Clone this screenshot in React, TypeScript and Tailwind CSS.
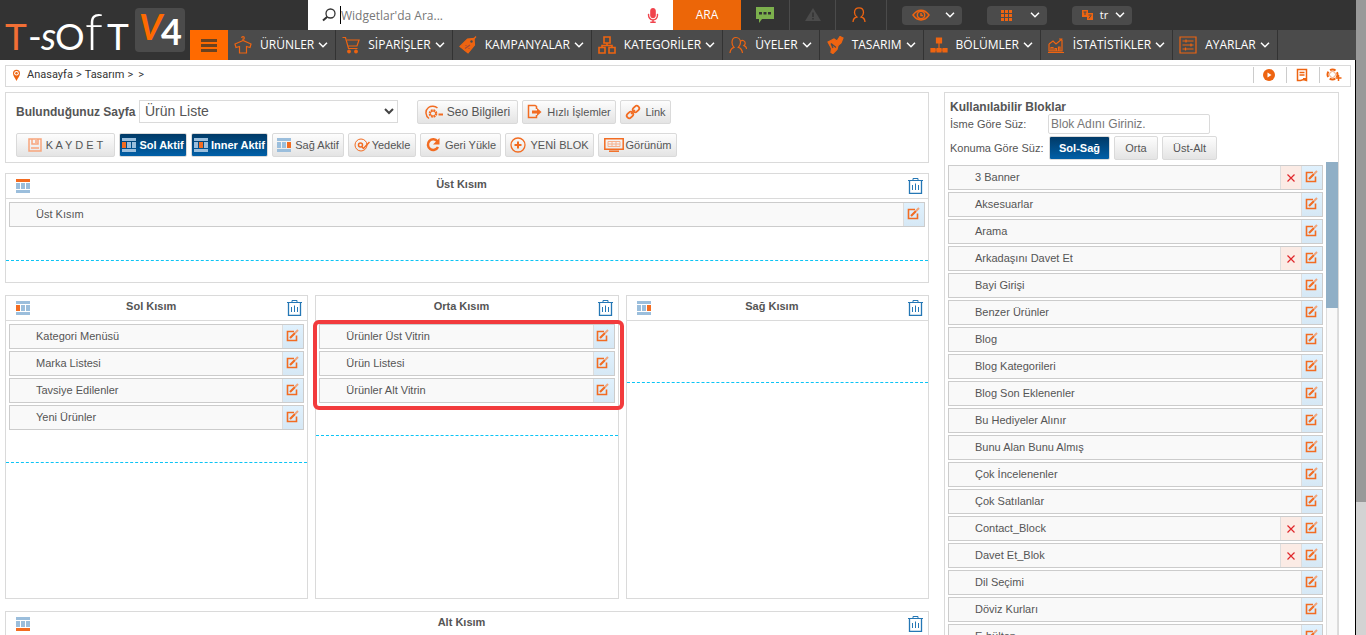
import type { ReactNode } from "react";
import clsx from "clsx";
import { FaMicrophone } from "react-icons/fa";

const availableBlocks: { name: string; removable?: boolean }[] = [
  { name: "3 Banner", removable: true },
  { name: "Aksesuarlar" },
  { name: "Arama" },
  { name: "Arkadaşını Davet Et", removable: true },
  { name: "Bayi Girişi" },
  { name: "Benzer Ürünler" },
  { name: "Blog" },
  { name: "Blog Kategorileri" },
  { name: "Blog Son Eklenenler" },
  { name: "Bu Hediyeler Alınır" },
  { name: "Bunu Alan Bunu Almış" },
  { name: "Çok İncelenenler" },
  { name: "Çok Satılanlar" },
  { name: "Contact_Block", removable: true },
  { name: "Davet Et_Blok", removable: true },
  { name: "Dil Seçimi" },
  { name: "Döviz Kurları" },
  { name: "E-bülten" },
];

const navItems: { label: string; icon: ReactNode }[] = [
  {
    label: "ÜRÜNLER",
    icon: (
      <NavIcon>
        <path d="M9 4.500V3.200a1.300 1.300 0 1 0-1.300-1.300M9 4.500L1 8l1 3.500 3.500-1V17h7v-6.500l3.500 1L17 8z" />
      </NavIcon>
    ),
  },
  {
    label: "SİPARİŞLER",
    icon: (
      <NavIcon>
        <path d="M.5 1.500h3l3 11h9M5 4h12l-2 6H6.500" />
        <circle cx="7" cy="15.500" r="1.300" fill="currentColor" />
        <circle cx="14" cy="15.500" r="1.300" fill="currentColor" />
      </NavIcon>
    ),
  },
  {
    label: "KAMPANYALAR",
    icon: (
      <NavIcon>
        <path d="M1 10.500L8.500 3 15 2.500 15.500 9 9 17z" fill="currentColor" />
        <path d="M13 5l4-4.500" />
        <circle cx="12.500" cy="5.500" r="1.200" fill="#4b4b4b" stroke="none" />
        <path d="M6 12.500l5-3.500M6.500 9.500h1M9.500 12.500h1" stroke="#a34a35" />
      </NavIcon>
    ),
  },
  {
    label: "KATEGORİLER",
    icon: (
      <NavIcon>
        <path d="M6 1h6v6H6zM1 11.500h6v5.500H1zM11 11.500h6v5.500h-6zM9 7v2.500M4 11.500v-2h10v2" strokeWidth="1.600" />
      </NavIcon>
    ),
  },
  {
    label: "ÜYELER",
    icon: (
      <NavIcon>
        <path d="M1 17c.3-4 2-5 4-5.600C3.500 10 3 8.500 3 6.500 3 3.500 4.500 1.500 7 1.500s4.500 2 4.500 5c0 2-.8 3.500-2.200 4.900 2.500.6 3.700 2 4.200 5.600M12 5c1.500-1.200 4.200-.2 4.200 2.200 0 1-.4 1.800-1.200 2.400 1.500.4 2.400 1.300 2.600 3.400" />
      </NavIcon>
    ),
  },
  {
    label: "TASARIM",
    icon: (
      <NavIcon>
        <path d="M2 6l6-3 3 2 3-4.500 3 1.500-2 5-3 2.500-1 4-4 4-2-1 .5-4z" fill="currentColor" />
        <path d="M5 7.500l5 4M5 7.500l2 4.500" stroke="#4b4b4b" />
      </NavIcon>
    ),
  },
  {
    label: "BÖLÜMLER",
    icon: (
      <NavIcon>
        <path d="M6.500 2h5v5h-5zM1 12.500h4V16H1zM7 12.500h4V16H7zM13 12.500h4V16h-4z" fill="currentColor" />
        <path d="M9 7v6M3 14h12" />
      </NavIcon>
    ),
  },
  {
    label: "İSTATİSTİKLER",
    icon: (
      <NavIcon>
        <path d="M2 8v7h13V4M1 16.500h16M2 8l4-3 3 3 6-5M12 3h3.500" />
        <path d="M4 15v-3.500h2V15M8 15v-2.500h1.500V15M11.500 15v-4h1.500v4" />
      </NavIcon>
    ),
  },
  {
    label: "AYARLAR",
    icon: (
      <NavIcon>
        <path d="M1 1h16v16H1zM3.500 5h11M3.500 9h11M3.500 13h11M7 3.500v3M12 7.500v3M6.500 11.500v3" />
      </NavIcon>
    ),
  },
];

function NavIcon({ children }: { children: ReactNode }) {
  return (
    <svg
      viewBox="0 0 18 18"
      className="size-[18px] flex-none text-[#ee6411]"
      fill="none"
      stroke="currentColor"
      strokeWidth="1.2"
      aria-hidden="true"
    >
      {children}
    </svg>
  );
}

function Chevron() {
  return (
    <svg viewBox="0 0 10 6" className="h-[6px] w-[10px] flex-none" fill="none" stroke="#fff" strokeWidth="1.5" aria-hidden="true">
      <path d="M1 .8l4 4 4-4" />
    </svg>
  );
}

function ToolIcon({ children }: { children: ReactNode }) {
  return (
    <svg
      viewBox="0 0 16 16"
      className="size-4 flex-none text-[#f26c22]"
      fill="none"
      stroke="currentColor"
      strokeWidth="1.5"
      aria-hidden="true"
    >
      {children}
    </svg>
  );
}

type Area = "top" | "left" | "center" | "right" | "bottom";

/** Miniature page plan with one region picked out in orange. */
function LayoutIcon({ active }: { active: Area }) {
  const color = (area: Area) => (area === active ? "#f36c21" : "#9bbedc");
  return (
    <svg viewBox="0 0 14 14" className="size-[14px] flex-none" shapeRendering="crispEdges" aria-hidden="true">
      <rect width="14" height="3" fill={color("top")} />
      <rect y="4" width="4" height="6" fill={color("left")} />
      <rect x="5" y="4" width="4" height="6" fill={color("center")} />
      <rect x="10" y="4" width="4" height="6" fill={color("right")} />
      <rect y="11" width="14" height="3" fill={color("bottom")} />
    </svg>
  );
}

function TrashIcon() {
  return (
    <svg viewBox="0 0 15 16" className="h-4 w-[15px]" fill="none" stroke="#2577b5" aria-hidden="true">
      <path d="M0 2.500h15M5 2.500v-2h5v2" />
      <path d="M1.500 3v12.500h12V3" strokeWidth="1.3" />
      <path d="M4.500 7v5M7.500 5.500v6.500M10.500 7v5" />
    </svg>
  );
}

function EditIcon() {
  return (
    <svg viewBox="0 0 13 13" className="size-[13px]" fill="none" stroke="#f26c22" aria-hidden="true">
      <path d="M8 2.500H1.500v9h9V6.500" strokeWidth="1.600" />
      <path d="M4 9l5-5" strokeWidth="2.200" />
      <path d="M9 4l3-3" stroke="#f0a47c" strokeWidth="2" />
    </svg>
  );
}

function Logo() {
  return (
    <a href="#" aria-label="T-SOFT V4" className="flex w-[190px] flex-none items-center pl-[5px]">
      <svg viewBox="0 0 185 60" className="h-[60px] w-[185px]" fontFamily="Lato, sans-serif" fill="#fff">
        <text x="0" y="50" fontSize="37" fill="#f26f35">T</text>
        <text x="23" y="50" fontSize="37">-</text>
        <text x="36" y="50" fontSize="38" fontStyle="italic">s</text>
        <text x="50" y="50" fontSize="37">O</text>
        <text x="80" y="50" fontSize="52" fontWeight="300">f</text>
        <text x="102" y="50" fontSize="37">T</text>
        <rect x="130" y="8" width="50" height="44" rx="4" fill="#4b4b4b" />
        <text x="134" y="40" fontSize="36" fontStyle="italic" fontWeight="700" fill="#ff6a00">V</text>
        <text x="156" y="45" fontSize="36" fontWeight="700">4</text>
      </svg>
    </a>
  );
}

function PillMenu({ label, children }: { label: string; children: ReactNode }) {
  return (
    <button
      type="button"
      aria-label={label}
      aria-haspopup="menu"
      className="flex h-[19px] w-[60px] items-center justify-between rounded bg-[#4b4b4b] pl-2.5 pr-[7px] text-[11px] text-white"
    >
      {children}
      <Chevron />
    </button>
  );
}

function TopBar() {
  return (
    <div className="flex h-[30px] pl-[118px]">
      <div className="flex w-[365px] items-center bg-white pl-3.5 pr-[13px]">
        <svg viewBox="0 0 14 14" className="size-[14px] flex-none" fill="none" stroke="#333" strokeWidth="1.3" aria-hidden="true">
          <circle cx="8.500" cy="5.500" r="4.500" />
          <path d="M5.300 8.700L1 12.500" strokeWidth="2" />
        </svg>
        <input
          type="text"
          aria-label="Widgetlar'da Ara"
          placeholder="Widgetlar'da Ara..."
          className="ml-1 h-[18px] min-w-0 flex-1 border-l border-black font-['Open_Sans',sans-serif] text-xs outline-none placeholder:text-[#777]"
        />
        <FaMicrophone className="h-[15px] w-[14px] text-[#f0434c]" aria-hidden="true" />
      </div>
      <button type="button" className="w-[68px] bg-[#ec6608] text-xs text-white">
        ARA
      </button>
      <button type="button" aria-label="Mesajlar" className="flex w-[49px] items-center justify-center border-r border-[#4b4b4b]">
        <svg viewBox="0 0 18 16" className="h-4 w-[18px]" aria-hidden="true">
          <path d="M0 0h18v12H6l-3 4v-4H0z" fill="#7cb04d" />
          <path d="M3 5h3v2.500H3zM7.500 5h3v2.500h-3zM12 5h3v2.500h-3z" fill="#333" />
        </svg>
      </button>
      <button type="button" aria-label="Uyarılar" className="flex w-[46px] items-center justify-center border-r border-[#4b4b4b]">
        <svg viewBox="0 0 16 14" className="h-[14px] w-4" aria-hidden="true">
          <path d="M8 0l8 13H0z" fill="#4b4b4b" />
          <path d="M8 4.500v4.500M8 10v1.500" stroke="#333" strokeWidth="1.500" />
        </svg>
      </button>
      <button type="button" aria-label="Hesabım" className="flex w-[51px] items-center justify-center border-r border-[#4b4b4b] pr-1">
        <svg viewBox="0 0 14 16" className="h-4 w-[14px]" fill="none" stroke="#ee6411" strokeWidth="1.3" aria-hidden="true">
          <path d="M1 15c.2-3.200 1.500-4.500 3.800-5C3.300 8.800 2.500 7.300 2.500 5.500c0-3 1.800-4.700 4.500-4.700s4.500 1.700 4.500 4.700c0 1.800-.8 3.300-2.300 4.500 2.300.5 3.600 1.800 3.800 5" />
        </svg>
      </button>
      <div className="ml-[15px] flex items-center gap-[25px]">
        <PillMenu label="Görünüm">
          <svg viewBox="0 0 18 12" className="h-3 w-[18px]" fill="none" stroke="#ee6411" strokeWidth="1.500" aria-hidden="true">
            <path d="M1 6c4.500-6.500 11.500-6.500 16 0-4.500 6.500-11.500 6.500-16 0z" />
            <circle cx="9" cy="6" r="3.700" />
            <path d="M9 4v2.500h2" />
          </svg>
        </PillMenu>
        <PillMenu label="Uygulamalar">
          <svg viewBox="0 0 11 11" className="ml-1 size-[11px]" fill="#ee6411" aria-hidden="true">
            <path d="M0 0h3v3H0zM4 0h3v3H4zM8 0h3v3H8zM0 4h3v3H0zM4 4h3v3H4zM8 4h3v3H8zM0 8h3v3H0zM4 8h3v3H4zM8 8h3v3H8z" />
          </svg>
        </PillMenu>
        <PillMenu label="Dil">
          <svg viewBox="0 0 11 10" className="h-2.5 w-[11px]" aria-hidden="true">
            <path d="M0 0h6v3h5v7H5V7H0z" fill="#ee6411" />
            <path d="M1.500 2h3M3 2v3M6.500 5h3M7 8.500l2-3" stroke="#4b4b4b" />
          </svg>
          <span>tr</span>
        </PillMenu>
      </div>
    </div>
  );
}

function MainNav() {
  return (
    <nav className="flex h-[30px] bg-[#4b4b4b] text-xs text-white">
      <button type="button" aria-label="Menü" className="flex w-[38px] flex-none items-center justify-center bg-[#ff6a00]">
        <svg viewBox="0 0 16 13" className="h-[13px] w-4" fill="#694221" aria-hidden="true">
          <path d="M0 0h16v3H0zM0 5h16v3H0zM0 10h16v3H0z" />
        </svg>
      </button>
      {navItems.map((item) => (
        <a key={item.label} href="#" className="flex flex-none items-center border-r border-[#333] pl-1.5 pr-[7px]">
          {item.icon}
          <span className="ml-2 mr-1">{item.label}</span>
          <Chevron />
        </a>
      ))}
    </nav>
  );
}

function Breadcrumb() {
  return (
    <div className="flex h-[22px] items-center border border-[#dadada] pb-0.5 pl-1.5 font-['Roboto',sans-serif] text-[11px] text-[#333]">
      <svg viewBox="0 0 9 12" className="mr-1.5 h-3 w-[9px]" aria-hidden="true">
        <path d="M4.500 12C3 9 1 7 1 4.300a3.500 3.500 0 0 1 7 0C8 7 6 9 4.500 12z" fill="#ee6411" />
        <circle cx="4.500" cy="4.300" r="2.300" fill="#fff" />
        <circle cx="4.500" cy="4.300" r="1.200" fill="#ee6411" />
      </svg>
      <div className="flex flex-1 gap-[3px]">
        <a href="#">Anasayfa</a>
        <span>&gt;</span>
        <a href="#">Tasarım</a>
        <span>&gt;</span>
        <span className="ml-0.5">&gt;</span>
      </div>
      {[
        <svg key="play" viewBox="0 0 14 14" className="size-[14px]" aria-hidden="true">
          <circle cx="7" cy="7" r="6" fill="#ee6411" />
          <path d="M5.500 4.500L9.500 7l-4 2.500z" fill="#fff" />
        </svg>,
        <svg key="note" viewBox="0 0 14 14" className="size-[14px]" fill="none" stroke="#ee6411" strokeWidth="1.500" aria-hidden="true">
          <path d="M2.500 1.500h9v11l-3-1-3 1h-3zM4.500 4.500h5M4.500 7h5" />
          <path d="M8 11h4" strokeWidth="2" />
        </svg>,
        <svg key="help" viewBox="0 0 16 14" className="h-[14px] w-4" fill="none" stroke="#ee6411" aria-hidden="true">
          <circle cx="6.500" cy="6.500" r="5" strokeDasharray="5.800 2" strokeDashoffset="3" strokeWidth="2" />
          <circle cx="6.500" cy="6.500" r="3" stroke="#f2a578" />
          <path d="M12.500 7v6M9.500 10h6" strokeWidth="1.500" />
        </svg>,
      ].map((icon, i) => (
        <button
          key={i}
          type="button"
          aria-label={["Video", "Notlar", "Yardım"][i]}
          className="flex h-4 w-[33px] items-center justify-center border-l border-[#ccc] pr-0.5 last:w-[31px]"
        >
          {icon}
        </button>
      ))}
    </div>
  );
}

function ToolButton({
  children,
  active,
  large,
  className,
}: {
  children: ReactNode;
  active?: boolean;
  large?: boolean;
  className?: string;
}) {
  return (
    <button
      type="button"
      className={clsx(
        "flex h-6 flex-none items-center justify-center whitespace-nowrap rounded-[2px] border border-[#dadada]",
        active
          ? "gap-[3px] bg-linear-to-b from-[#013a67] to-[#0160a8] font-bold text-white"
          : "gap-1 bg-linear-to-b from-[#fdfdfd] to-[#e4e4e4] text-[#555]",
        large ? "text-xs" : "text-[11px]",
        className,
      )}
    >
      {children}
    </button>
  );
}

function Toolbar() {
  return (
    <section className="h-[71px] border border-[#dadada] pl-2.5 pt-[5px]">
      <div className="flex items-center">
        <label htmlFor="page" className="w-[123px] flex-none pt-0.5 text-xs font-bold whitespace-nowrap">
          Bulunduğunuz Sayfa
        </label>
        <div className="relative">
          <select
            id="page"
            className="block h-[23px] w-[259px] appearance-none border border-[#dadada] bg-white pl-[5px] text-sm text-[#555] outline-none"
          >
            <option>Ürün Liste</option>
          </select>
          <svg
            viewBox="0 0 10 7"
            className="pointer-events-none absolute right-1 top-2 h-[7px] w-2.5"
            fill="none"
            stroke="#444"
            strokeWidth="2"
            aria-hidden="true"
          >
            <path d="M1 1l4 4 4-4" />
          </svg>
        </div>
        <div className="ml-[19px] flex gap-1 pt-0.5">
          <ToolButton large className="w-[101px]">
            <svg viewBox="0 0 18 16" className="h-4 w-[18px]" fill="none" stroke="#f26c22" strokeWidth="1.500" aria-hidden="true">
              <path d="M4 14.500C.5 12-.3 6.500 3.500 3.500 6 1.700 10 1.800 12.500 4" />
              <circle cx="8" cy="9.500" r="3.300" strokeWidth="2" strokeDasharray="1.800 .8" />
              <circle cx="8" cy="9.500" r="2.500" strokeWidth="1" />
              <path d="M13.500 10.500H18" strokeWidth="2" />
            </svg>
            Seo Bilgileri
          </ToolButton>
          <ToolButton className="w-[94px]">
            <ToolIcon>
              <path d="M9.500 5V2.500L8 1.500H1.500v12h8V11" />
              <path d="M5 6.500h5V4l4.500 4L10 12V9.500H5z" fill="currentColor" stroke="none" />
            </ToolIcon>
            Hızlı İşlemler
          </ToolButton>
          <ToolButton className="w-[51px]">
            <ToolIcon>
              <rect x="-3.500" y="-2.500" width="7" height="5" rx="2.500" transform="translate(11 5) rotate(-45)" strokeWidth="1.800" />
              <rect x="-3.500" y="-2.500" width="7" height="5" rx="2.500" transform="translate(5 11) rotate(-45)" strokeWidth="1.800" />
              <path d="M6 10l4-4" />
            </ToolIcon>
            Link
          </ToolButton>
        </div>
      </div>
      <div className="mt-[9px] flex gap-1">
        <ToolButton className="w-[99px]">
          <svg viewBox="0 0 14 14" className="size-[14px]" fill="none" stroke="#f7a57c" strokeWidth="1.500" aria-hidden="true">
            <path d="M1 1h12v12H1zM4 1v5h6V1M8 2v3M3 10h8" />
          </svg>
          K A Y D E T
        </ToolButton>
        <ToolButton active className="w-[68px]">
          <LayoutIcon active="left" />
          Sol Aktif
        </ToolButton>
        <ToolButton active className="w-[77px]">
          <LayoutIcon active="center" />
          Inner Aktif
        </ToolButton>
        <ToolButton className="w-[72px]">
          <LayoutIcon active="right" />
          Sağ Aktif
        </ToolButton>
        <ToolButton className="w-[68px] gap-[2px]">
          <ToolIcon>
            <circle cx="7" cy="8" r="6" strokeWidth="1" />
            <circle cx="6.500" cy="8" r="2" />
            <path d="M8 10l1.500 1.500L15.500 5" />
          </ToolIcon>
          Yedekle
        </ToolButton>
        <ToolButton className="w-[81px]">
          <ToolIcon>
            <path d="M12.500 4.500A5.300 5.300 0 1 0 13 10" strokeWidth="2.500" />
            <path d="M14.500 1v6.500H8z" fill="currentColor" stroke="none" />
          </ToolIcon>
          Geri Yükle
        </ToolButton>
        <ToolButton className="w-[89px]">
          <ToolIcon>
            <circle cx="8" cy="8" r="7" strokeWidth="1.300" />
            <path d="M8 4.500v7M4.500 8h7" strokeWidth="2" />
          </ToolIcon>
          YENİ BLOK
        </ToolButton>
        <ToolButton className="w-[79px] gap-[2px]">
          <svg viewBox="0 0 20 14" className="h-[14px] w-5" fill="none" stroke="#f26c22" aria-hidden="true">
            <path d="M.8.800h18.400v10.400H.8z" strokeWidth="1.500" />
            <path d="M4 3.500h12v5H4zM4 6h12M8 3.500v5M12 3.500v5" stroke="#f7b08c" />
            <path d="M5 13.200h10" strokeWidth="1.500" />
          </svg>
          Görünüm
        </ToolButton>
      </div>
    </section>
  );
}

function BlockRow({ name, removable }: { name: string; removable?: boolean }) {
  return (
    <li className="flex h-[25px] border border-[#ccc] bg-[#f9f9f9] text-[11px]">
      <span className="flex-1 pl-[26px] leading-[22px]">{name}</span>
      {removable && (
        <button
          type="button"
          aria-label={`${name} sil`}
          className="flex w-[21px] items-center justify-center border-l border-[#ddd] bg-[#fbebe5]"
        >
          <svg viewBox="0 0 8 8" className="size-2" stroke="#e0262b" strokeWidth="1.200" aria-hidden="true">
            <path d="M.5.500l7 7M7.500.500l-7 7" />
          </svg>
        </button>
      )}
      <button
        type="button"
        aria-label={`${name} düzenle`}
        className="flex w-[21px] items-center justify-center border-l border-[#ddd] bg-linear-to-b from-[#e0f1fd] to-[#d6e8f5] pb-0.5 pr-0.5"
      >
        <EditIcon />
      </button>
    </li>
  );
}

function Zone({
  title,
  area,
  blocks = [],
  highlighted,
  className,
}: {
  title: string;
  area: Area;
  blocks?: string[];
  highlighted?: boolean;
  className?: string;
}) {
  return (
    <section className={clsx("border border-[#dadada]", className)}>
      <header className="flex h-[25px] items-center border-b border-[#dadada] pl-2.5 pr-[5px]">
        <div className="w-[15px]">{area !== "center" && <LayoutIcon active={area} />}</div>
        <h2 className="flex-1 pb-[3px] pr-4 text-center text-[11px] font-bold">{title}</h2>
        <button type="button" aria-label={`${title} temizle`}>
          <TrashIcon />
        </button>
      </header>
      <div className="relative min-h-[62px] border-b border-dashed border-[#0cc4f5] px-[3px] pb-8 pt-[3px]">
        <ul className="flex flex-col gap-0.5">
          {blocks.map((name) => (
            <BlockRow key={name} name={name} />
          ))}
        </ul>
        {highlighted && (
          <div className="absolute -left-[3px] -right-[6px] -top-px bottom-[25px] rounded-md border-4 border-[#f23b3d]" />
        )}
      </div>
    </section>
  );
}

function AvailableBlocks() {
  return (
    <aside className="w-[395px] flex-none border border-[#dadada]">
      <div className="pl-[5px]">
        <h2 className="pt-[7px] text-xs leading-[14px] font-bold">Kullanılabilir Bloklar</h2>
        <div className="flex text-[11px]">
          <label htmlFor="block-name" className="w-[98px] pt-0.5">
            İsme Göre Süz:
          </label>
          <input
            id="block-name"
            type="text"
            placeholder="Blok Adını Giriniz."
            className="h-5 w-[162px] rounded-[2px] border border-[#dadada] px-0.5 text-xs outline-none placeholder:text-[#777]"
          />
        </div>
        <div className="mt-0.5 flex items-center text-[11px]">
          <span className="w-[99px]">Konuma Göre Süz:</span>
          <div className="flex gap-1">
            <ToolButton active className="w-[61px]">
              Sol-Sağ
            </ToolButton>
            <ToolButton className="w-[44px]">Orta</ToolButton>
            <ToolButton className="w-[55px]">Üst-Alt</ToolButton>
          </div>
        </div>
      </div>
      <div className="mt-0.5 flex">
        <ul className="flex flex-1 flex-col gap-0.5 pl-[3px] pr-[3px] pt-[3px]">
          {availableBlocks.map((block) => (
            <BlockRow key={block.name} {...block} />
          ))}
        </ul>
        <div className="w-3 border-x border-[#ddd] bg-[#f9f9f9]">
          <div className="-mx-px h-[146px] bg-[#90afc6]" />
        </div>
      </div>
    </aside>
  );
}

export default function App() {
  return (
    <div className="flex h-screen overflow-hidden bg-white font-['Liberation_Sans',Arial,sans-serif] text-[#555]">
      <div className="min-w-0 flex-1">
        <header className="flex h-[60px] bg-[#333] font-['Open_Sans',sans-serif]">
          <Logo />
          <div className="min-w-0 flex-1">
            <TopBar />
            <MainNav />
          </div>
        </header>
        <div className="border-r border-black pl-[5px] pt-[5px]">
          <div className="pr-1">
            <Breadcrumb />
          </div>
          <main className="mt-[5px] flex gap-[15px] pr-4">
            <div className="min-w-0 flex-1">
              <Toolbar />
              <Zone title="Üst Kısım" area="top" blocks={["Üst Kısım"]} className="mt-2.5 h-[110px]" />
              <div className="my-3 grid grid-cols-3 gap-[7px]">
                <Zone
                  title="Sol Kısım"
                  area="left"
                  blocks={["Kategori Menüsü", "Marka Listesi", "Tavsiye Edilenler", "Yeni Ürünler"]}
                  className="min-h-[304px]"
                />
                <Zone
                  title="Orta Kısım"
                  area="center"
                  blocks={["Ürünler Üst Vitrin", "Ürün Listesi", "Ürünler Alt Vitrin"]}
                  highlighted
                />
                <Zone title="Sağ Kısım" area="right" />
              </div>
              <Zone title="Alt Kısım" area="bottom" />
            </div>
            <AvailableBlocks />
          </main>
        </div>
      </div>
      <div className="w-2.5 flex-none bg-[#d3d3d3]">
        <div className="h-[79%] bg-[#999]" />
      </div>
    </div>
  );
}
